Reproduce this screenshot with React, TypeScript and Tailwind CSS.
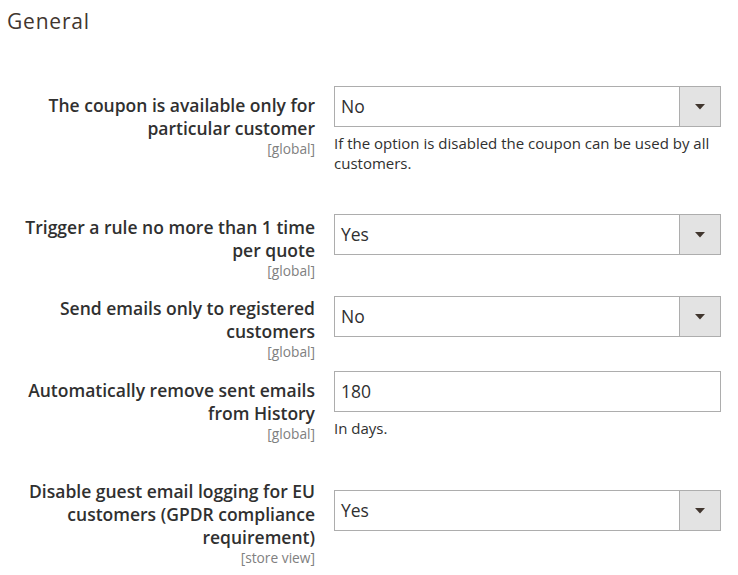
import React from "react";

const font = { fontFamily: '"Open Sans", "Liberation Sans", sans-serif' };

function Arrow() {
  return (
    <div className="w-[41px] h-full bg-[#e3e3e3] border-l border-[#adadad] flex items-center justify-center">
      <svg width="10" height="6" viewBox="0 0 10 6">
        <polygon points="0,0 10,0 5,5.5" fill="#41362f" />
      </svg>
    </div>
  );
}

function Select({ value }: { value: string }) {
  return (
    <div className="h-[41px] w-[387px] border border-[#adadad] bg-white flex items-stretch">
      <div className="flex-1 flex items-center pl-[6px] text-[17.5px] text-[#303030]">{value}</div>
      <Arrow />
    </div>
  );
}

function Input({ value }: { value: string }) {
  return (
    <div className="h-[41px] w-[387px] border border-[#adadad] bg-white flex items-center pl-[6px] text-[17.5px] text-[#303030]">
      {value}
    </div>
  );
}

function Label({ lines, scope, pt }: { lines: string[]; scope: string; pt: string }) {
  return (
    <div className={`w-[315px] shrink-0 pl-[10px] text-right ${pt}`}>
      <div className="text-[17.5px] leading-[23px] font-semibold text-[#303030]">
        {lines.map((l, i) => (
          <div key={i}>{l}</div>
        ))}
      </div>
      <div className="text-[13.75px] leading-[18px] text-[#808080]">{scope}</div>
    </div>
  );
}

function Note({ children }: { children: React.ReactNode }) {
  return <div className="mt-[6px] w-[387px] text-[15px] leading-[20px] text-[#303030]">{children}</div>;
}

export default function App() {
  return (
    <div className="w-[738px] h-[575px] bg-white overflow-hidden" style={font}>
      <div className="pl-[7px] pt-[7px] text-[21px] leading-[28px] text-[#41362f] tracking-[0.8px]">General</div>

      <div className="flex items-start gap-[19px] mt-[51px]">
        <Label lines={["The coupon is available only for", "particular customer"]} scope="[global]" pt="pt-[8px]" />
        <div>
          <Select value="No" />
          <Note>If the option is disabled the coupon can be used by all customers.</Note>
        </div>
      </div>

      <div className="flex items-start gap-[19px] mt-[41px]">
        <Label lines={["Trigger a rule no more than 1 time", "per quote"]} scope="[global]" pt="pt-[2px]" />
        <div>
          <Select value="Yes" />
        </div>
      </div>

      <div className="flex items-start gap-[19px] mt-[16px]">
        <Label lines={["Send emails only to registered", "customers"]} scope="[global]" pt="pt-[1px]" />
        <div>
          <Select value="No" />
        </div>
      </div>

      <div className="flex items-start gap-[19px] mt-[10px]">
        <Label lines={["Automatically remove sent emails", "from History"]} scope="[global]" pt="pt-[8px]" />
        <div>
          <Input value="180" />
          <Note>In days.</Note>
        </div>
      </div>

      <div className="flex items-start gap-[19px] mt-[35px]">
        <Label
          lines={["Disable guest email logging for EU", "customers (GPDR compliance", "requirement)"]}
          scope="[store view]"
          pt="pt-[2px]"
        />
        <div className="pt-[12px]">
          <Select value="Yes" />
        </div>
      </div>
    </div>
  );
}
